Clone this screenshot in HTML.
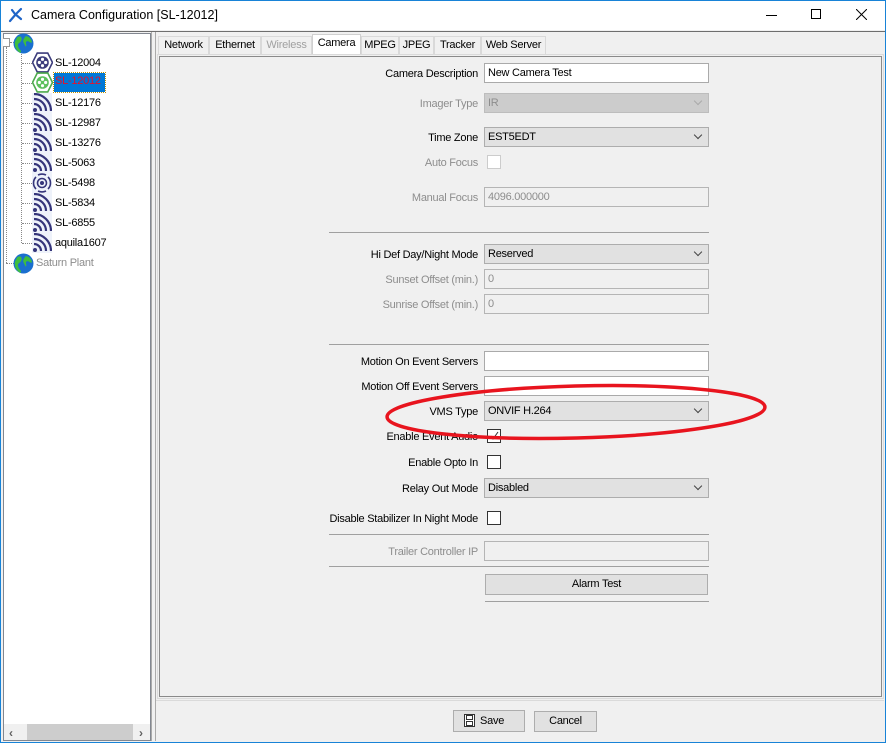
<!DOCTYPE html>
<html><head><meta charset="utf-8">
<style>
*{box-sizing:border-box;margin:0;padding:0}
body{width:886px;height:743px;overflow:hidden;background:#f0f0f0;font-family:"Liberation Sans",Tahoma,sans-serif;font-size:11px;letter-spacing:-0.25px;color:#000;position:relative}
.a{position:absolute}
.win{left:0;top:0;width:886px;height:743px;border:1px solid #1883d7}
.title{left:1px;top:1px;width:884px;height:29px;background:#fff}
.tree{left:3px;top:33px;width:148px;height:708px;background:#fff;border:1px solid #828790}
.lbl{position:absolute;right:408px;white-space:nowrap;text-align:right;margin-top:2px}
.dis{color:#8d8d8d}
.inp{position:absolute;left:484px;width:225px;height:20px;background:#fff;border:1px solid #aaa;padding:2px 3px;line-height:14px}
.inp.d{background:#f0f0f0;border-color:#b5b5b5;color:#8d8d8d}
.cmb{position:absolute;left:484px;width:225px;height:20px;background:#e1e1e1;border:1px solid #adadad;padding:2px 3px;line-height:14px}
.cmb.d{background:#ccc;border-color:#bdbdbd;color:#8d8d8d}
.cmb:after{content:"";position:absolute;right:7px;top:4px;width:5px;height:5px;border-right:1px solid #444;border-bottom:1px solid #444;transform:rotate(45deg)}
.cmb.d:after{border-color:#aaa}
.chk{position:absolute;left:487px;width:14px;height:14px;background:#fff;border:1px solid #333}
.sep{position:absolute;left:329px;width:380px;height:1px;background:#a0a0a0}
.tab{position:absolute;top:36px;height:18px;border:1px solid #d9d9d9;border-bottom:none;background:#f0f0f0;padding-top:2px;line-height:13px;text-align:center;overflow:hidden;white-space:nowrap}
.node{position:absolute;left:55px;white-space:nowrap;margin-top:1px}
.dh{position:absolute;height:0;border-top:1px dotted #888}
</style></head><body>
<div class="a win"></div>
<div class="a title"></div>
<svg class="a" style="left:8px;top:7px" width="16" height="16" viewBox="0 0 16 16"><path d="M2 14 L8 7 M8 7 L13 2 M4 3 L7 7 L13 12" stroke="#1e64c8" stroke-width="2.2" fill="none" stroke-linecap="round"/></svg>
<div class="a" style="left:31px;top:8px;font-size:12.5px;letter-spacing:0">Camera Configuration [SL-12012]</div>
<div class="a" style="left:766px;top:15px;width:11px;height:1px;background:#000"></div>
<div class="a" style="left:811px;top:9px;width:10px;height:10px;border:1px solid #000"></div>
<svg class="a" style="left:856px;top:9px" width="11" height="11"><path d="M0 0L11 11M11 0L0 11" stroke="#000" stroke-width="1"/></svg>
<div class="a" style="left:1px;top:31px;width:884px;height:1px;background:#6e6e6e"></div>

<!-- tree -->
<div class="a tree"></div>
<div class="a" style="left:3px;top:38px;width:7px;height:9px;border:1px solid #999;border-left:none;background:#fff"></div>
<div class="dh" style="left:10px;top:42px;width:4px"></div>
<div class="a" style="left:21px;top:52px;width:0;height:191px;border-left:1px dotted #888"></div>
<div class="a" style="left:6px;top:47px;width:0;height:216px;border-left:1px dotted #888"></div>
<div class="dh" style="left:6px;top:263px;width:8px"></div>
<svg class="a" style="left:13px;top:33px" width="21" height="21" viewBox="0 0 20 20"><circle cx="10" cy="10" r="9.5" fill="#1a6fcf"/><path d="M4 4c3-2 5 0 4 3s-4 2-3 6 4 3 2 6C3 17 1 12 2 8z M12 3c3 0 6 3 6 6-2 1-3-2-5-1s1 4-1 5c-1-3-3-4-2-7z" fill="#3fbe3f"/></svg>
<svg class="a" style="left:13px;top:253px" width="21" height="21" viewBox="0 0 20 20"><circle cx="10" cy="10" r="9.5" fill="#1a6fcf"/><path d="M4 4c3-2 5 0 4 3s-4 2-3 6 4 3 2 6C3 17 1 12 2 8z M12 3c3 0 6 3 6 6-2 1-3-2-5-1s1 4-1 5c-1-3-3-4-2-7z" fill="#3fbe3f"/></svg>
<div class="a dis" style="left:36px;top:257px">Saturn Plant</div>

<div class="dh" style="left:22px;top:63px;width:10px"></div>
<svg class="a" style="left:32px;top:52px" width="21" height="21" viewBox="0 0 20 20"><polygon points="5,1 15,1 19.5,10 15,19 5,19 0.5,10" fill="#fff" stroke="#3c3c7c" stroke-width="1.5"/><circle cx="10" cy="10" r="6" fill="#3c3c7c"/><circle cx="10" cy="7" r="1.5" fill="#fff"/><circle cx="10" cy="13" r="1.5" fill="#fff"/><circle cx="7" cy="10" r="1.5" fill="#fff"/><circle cx="13" cy="10" r="1.5" fill="#fff"/></svg>
<div class="node" style="top:56px">SL-12004</div>
<div class="dh" style="left:22px;top:83px;width:10px"></div>
<svg class="a" style="left:32px;top:72px" width="21" height="21" viewBox="0 0 20 20"><polygon points="5,1 15,1 19.5,10 15,19 5,19 0.5,10" fill="#fff" stroke="#4caa4c" stroke-width="1.5"/><circle cx="10" cy="10" r="6" fill="#5cc05c"/><circle cx="10" cy="7" r="1.5" fill="#fff"/><circle cx="10" cy="13" r="1.5" fill="#fff"/><circle cx="7" cy="10" r="1.5" fill="#fff"/><circle cx="13" cy="10" r="1.5" fill="#fff"/></svg>
<div class="node" style="top:73px;left:54px;width:51px;background:#0078d7;color:#e8102a;padding:2px 1px;outline:1px dotted #c09000;height:19px;margin-top:0">SL-12012</div>

<div id="wifis"></div>
<div class="a" style="left:4px;top:724px;width:146px;height:16px;background:#f0f0f0"></div>
<div class="a" style="left:27px;top:724px;width:106px;height:16px;background:#cdcdcd"></div>
<div class="a" style="left:9px;top:726px;color:#606060;font-size:12px;font-weight:bold">&#x2039;</div>
<div class="a" style="left:139px;top:726px;color:#606060;font-size:12px;font-weight:bold">&#x203A;</div>

<!-- splitter -->
<div class="a" style="left:151px;top:32px;width:1px;height:709px;background:#aaa"></div>
<div class="a" style="left:155px;top:32px;width:1px;height:709px;background:#aaa"></div>

<!-- tabs -->
<div class="tab" style="left:158px;width:51px">Network</div>
<div class="tab" style="left:209px;width:52px">Ethernet</div>
<div class="tab dis" style="left:261px;width:51px;color:#a0a0a0">Wireless</div>
<div class="tab" style="left:312px;width:49px;top:34px;height:20px;background:#fff;border-color:#d0d0d0">Camera</div>
<div class="tab" style="left:361px;width:38px">MPEG</div>
<div class="tab" style="left:399px;width:35px">JPEG</div>
<div class="tab" style="left:434px;width:47px">Tracker</div>
<div class="tab" style="left:481px;width:65px">Web Server</div>
<div class="a" style="left:157px;top:54px;width:727px;height:645px;border:1px solid #dadada"></div>
<div class="a" style="left:159px;top:56px;width:723px;height:641px;border:1px solid #8a8a8a"></div>

<!-- form -->
<div class="lbl" style="top:66px">Camera Description</div><div class="inp" style="top:63px">New Camera Test</div>
<div class="lbl dis" style="top:96px">Imager Type</div><div class="cmb d" style="top:93px">IR</div>
<div class="lbl" style="top:130px">Time Zone</div><div class="cmb" style="top:127px">EST5EDT</div>
<div class="lbl dis" style="top:155px">Auto Focus</div><div class="chk" style="top:155px;border-color:#ccc"></div>
<div class="lbl dis" style="top:190px">Manual Focus</div><div class="inp d" style="top:187px">4096.000000</div>
<div class="sep" style="top:232px"></div>
<div class="lbl" style="top:247px">Hi Def Day/Night Mode</div><div class="cmb" style="top:244px">Reserved</div>
<div class="lbl dis" style="top:272px">Sunset Offset (min.)</div><div class="inp d" style="top:269px">0</div>
<div class="lbl dis" style="top:297px">Sunrise Offset (min.)</div><div class="inp d" style="top:294px">0</div>
<div class="sep" style="top:344px"></div>
<div class="lbl" style="top:354px">Motion On Event Servers</div><div class="inp" style="top:351px"></div>
<div class="lbl" style="top:379px">Motion Off Event Servers</div><div class="inp" style="top:376px"></div>
<div class="lbl" style="top:404px">VMS Type</div><div class="cmb" style="top:401px">ONVIF H.264</div>
<div class="lbl" style="top:429px">Enable Event Audio</div><div class="chk" style="top:429px"><svg width="12" height="12" style="position:absolute;left:0;top:0"><path d="M3 6L5 9L10 2" stroke="#333" fill="none"/></svg></div>
<div class="lbl" style="top:455px">Enable Opto In</div><div class="chk" style="top:455px"></div>
<div class="lbl" style="top:481px">Relay Out Mode</div><div class="cmb" style="top:478px">Disabled</div>
<div class="lbl" style="top:511px">Disable Stabilizer In Night Mode</div><div class="chk" style="top:511px"></div>
<div class="sep" style="top:534px"></div>
<div class="lbl dis" style="top:544px">Trailer Controller IP</div><div class="inp d" style="top:541px"></div>
<div class="sep" style="top:566px"></div>
<div class="a" style="left:485px;top:574px;width:223px;height:21px;background:#e1e1e1;border:1px solid #adadad;text-align:center;line-height:19px">Alarm Test</div>
<div class="a" style="left:485px;top:601px;width:224px;height:1px;background:#a0a0a0"></div>

<svg class="a" style="left:0;top:0" width="886" height="743"><ellipse cx="576" cy="412" rx="189" ry="26" transform="rotate(-1.5 576 412)" fill="none" stroke="#e8141e" stroke-width="3.5"/></svg>

<div class="a" style="left:156px;top:700px;width:728px;height:1px;background:#dadada"></div>
<div class="a" style="left:453px;top:710px;width:72px;height:22px;background:#e1e1e1;border:1px solid #adadad;line-height:20px;padding-left:26px">Save</div>
<svg class="a" style="left:464px;top:714px" width="11" height="13"><rect x="0.5" y="0.5" width="10" height="12" fill="#fff" stroke="#333"/><rect x="2.5" y="1.5" width="6" height="4" fill="none" stroke="#333"/><rect x="2.5" y="7.5" width="6" height="4" fill="none" stroke="#333"/></svg>
<div class="a" style="left:534px;top:711px;width:63px;height:21px;background:#e1e1e1;border:1px solid #adadad;line-height:19px;text-align:center">Cancel</div>

<script>
var names=["SL-12176","SL-12987","SL-13276","SL-5063","SL-5498","SL-5834","SL-6855","aquila1607"];
var h="";
for(var i=0;i<names.length;i++){
 var y=92+i*20, t=y+4;
 h+='<div class="dh" style="left:22px;top:'+(y+11)+'px;width:10px"></div>';
 if(names[i]=="SL-5498"){
  h+='<svg class="a" style="left:32px;top:'+(y+1)+'px" width="20" height="20" viewBox="0 0 20 20"><rect width="20" height="20" fill="#eef2fa"/><circle cx="10" cy="10" r="2" fill="#35357a"/><g fill="none" stroke="#35357a" stroke-width="1.6"><circle cx="10" cy="10" r="4.5"/><path d="M4 4A8.5 8.5 0 0 0 4 16M16 4A8.5 8.5 0 0 1 16 16M6 2A9 9 0 0 1 14 2M6 18A9 9 0 0 0 14 18"/></g></svg>';
 } else {
  h+='<svg class="a" style="left:32px;top:'+(y+1)+'px" width="20" height="20" viewBox="0 0 20 20"><rect width="20" height="20" fill="#eef2fa"/><circle cx="3" cy="17" r="2" fill="#35357a"/><g fill="none" stroke="#35357a" stroke-width="2.2"><path d="M2 11A7 7 0 0 1 9 18"/><path d="M2 6A12 12 0 0 1 14 18"/><path d="M2 1A17 17 0 0 1 19 18"/></g></svg>';
 }
 h+='<div class="node" style="top:'+t+'px">'+names[i]+'</div>';
}
document.getElementById("wifis").innerHTML=h;
</script>
</body></html>
